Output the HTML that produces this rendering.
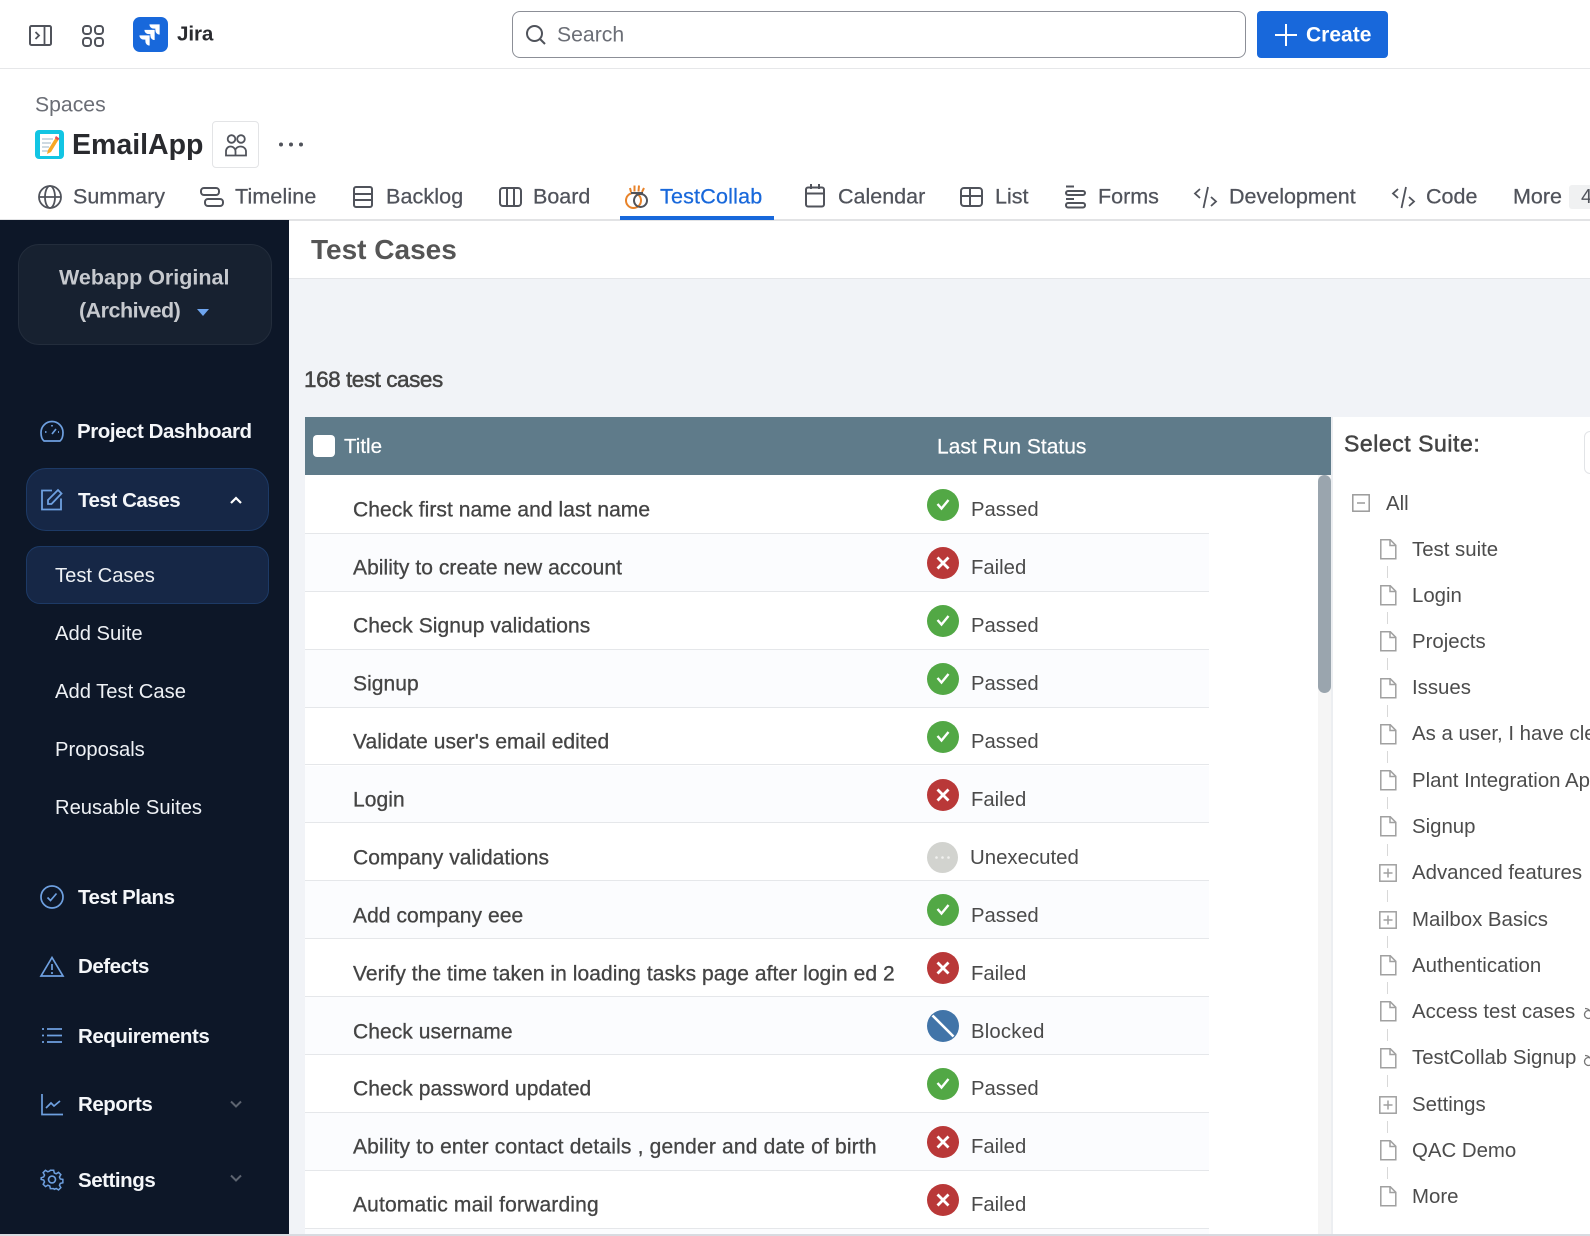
<!DOCTYPE html>
<html><head><meta charset="utf-8"><title>Test Cases</title>
<style>
*{box-sizing:border-box}
html{margin:0;padding:0;background:#fff;width:1590px;height:1236px;overflow:hidden}
body{margin:0;padding:0;background:#fff;width:1590px;height:1236px;overflow:hidden;font-family:"Liberation Sans",sans-serif;color:#444}
#w{position:relative;width:1590px;height:1236px;overflow:hidden}
.a,.t,svg.i{position:absolute}
.t{white-space:nowrap;line-height:1;transform:translateY(-50%)}
.tab{font-size:21.5px;color:#50535b;top:197px;-webkit-text-stroke:.25px #50535b}
.m{font-size:20.5px;font-weight:bold;color:#f4f6f9;left:78px;letter-spacing:-.45px;margin-top:1px}
.s{font-size:20.2px;color:#eef1f5;left:55px;margin-top:1px}
.row{position:absolute;left:305px;width:904px;height:57.9px;border-bottom:1px solid #e5e7ea}
.rt{position:absolute;left:48px;top:calc(50% + 6px);font-size:21px;letter-spacing:.06px;color:#444;white-space:nowrap;line-height:1;-webkit-text-stroke:.3px #444;transform:translateY(-50%)}
.st{position:absolute;left:666px;font-size:20.3px;color:#4a4a4a;line-height:1;top:calc(50% + 6px);transform:translateY(-50%);white-space:nowrap}
.ic{position:absolute;left:622px;top:13px;width:32px;height:32px;border-radius:50%}
.g{background:#52a845}.r{background:#b93838}.b{background:#4174a8}.u{background:#d2d3cf}
.ic svg{position:absolute;left:0;top:0}
.su{position:absolute;left:1412px;font-size:20.4px;color:#4c4c4c;white-space:nowrap;line-height:1;transform:translateY(-50%);margin-top:1px}
svg{overflow:visible}
</style></head><body><div id="w">

<!-- top bar -->
<div class="a" style="left:0;top:68px;width:1590px;height:1px;background:#e6e7e9"></div>
<svg class="i" style="left:29px;top:25px" width="23" height="21" viewBox="0 0 23 21" fill="none" stroke="#50535b" stroke-width="2"><rect x="1" y="1" width="21" height="19" rx="1.5"/><path d="M15.5 1v19M6.5 7l3.5 3.500-3.500 3.500" stroke-width="1.800"/></svg>
<svg class="i" style="left:82px;top:25px" width="22" height="22" viewBox="0 0 22 22" fill="none" stroke="#50535b" stroke-width="2"><rect x="1" y="1" width="8" height="8" rx="3"/><rect x="13" y="1" width="8" height="8" rx="3"/><rect x="1" y="13" width="8" height="8" rx="3"/><rect x="13" y="13" width="8" height="8" rx="3"/></svg>
<svg class="i" style="left:133px;top:17px" width="35" height="35" viewBox="0 0 35 35"><rect width="35" height="35" rx="7" fill="#1868db"/><path d="M16 7h11v11c-3 0-5-2-5-5v-1h-1c-3 0-5-2-5-5zM11 12.500h11v11c-3 0-5-2-5-5v-1h-1c-3 0-5-2-5-5zM6 18h11v11c-3 0-5-2-5-5v-1h-1c-3 0-5-2-5-5z" fill="#fff" stroke="#1868db" stroke-width=".7"/></svg>
<div class="t" style="left:177px;top:35px;font-size:20.6px;font-weight:bold;color:#292a2e;letter-spacing:-.1px">Jira</div>

<div class="a" style="left:512px;top:11px;width:734px;height:47px;border:1px solid #8c8f97;border-radius:8px"></div>
<svg class="i" style="left:525px;top:24px" width="22" height="22" viewBox="0 0 22 22" fill="none" stroke="#50535b" stroke-width="2"><circle cx="9.500" cy="9.500" r="7.500"/><path d="M15 15l5 5"/></svg>
<div class="t" style="left:557px;top:35px;font-size:21.200px;color:#6b6e76">Search</div>
<div class="a" style="left:1257px;top:11px;width:131px;height:47px;background:#1868db;border-radius:4px"></div>
<svg class="i" style="left:1275px;top:24px" width="22" height="22" viewBox="0 0 22 22" stroke="#fff" stroke-width="2"><path d="M11 0v22M0 11h22"/></svg>
<div class="t" style="left:1306px;top:35px;font-size:21px;font-weight:bold;color:#fff">Create</div>

<!-- space header -->
<div class="t" style="left:35px;top:105px;font-size:21.200px;color:#6b6e76">Spaces</div>
<svg class="i" style="left:35px;top:130px" width="29" height="29" viewBox="0 0 29 29"><rect width="29" height="29" rx="4" fill="#12c5e3"/><rect x="5" y="4" width="19" height="22" fill="#fff"/><path d="M7 9h11M7 13h9M7 17h7M7 21h6" stroke="#9db4c6" stroke-width="1"/><path d="M21 7l3 2-8 13-4 2 1-4z" fill="#f7a823"/><path d="M21 6l3.500 2.500-1.500 2-3.200-2.400z" fill="#e8505b"/></svg>
<div class="t" style="left:72px;top:145px;font-size:28.500px;font-weight:bold;color:#292a2e">EmailApp</div>
<div class="a" style="left:212px;top:121px;width:47px;height:47px;border:1px solid #e3e4e6;border-radius:4px"></div>
<svg class="i" style="left:225px;top:134px" width="22" height="23" viewBox="0 0 22 23" fill="none" stroke="#50535b" stroke-width="1.800"><circle cx="6.500" cy="5" r="3.800"/><circle cx="16" cy="5" r="3.800"/><path d="M1 21.500v-4c0-3 2-5 4.500-5s5 2 5 5v4zM10.500 15.500c1-2 3-3 5-3 3 0 5.500 2 5.500 5v4H10.500"/></svg>
<svg class="i" style="left:278px;top:142px" width="26" height="5" viewBox="0 0 26 5" fill="#50535b"><circle cx="3" cy="2.500" r="2"/><circle cx="13" cy="2.500" r="2"/><circle cx="23" cy="2.500" r="2"/></svg>

<!-- tabs -->
<svg class="i" style="left:38px;top:185px" width="24" height="24" viewBox="0 0 24 24" fill="none" stroke="#50535b" stroke-width="1.800"><circle cx="12" cy="12" r="11"/><ellipse cx="12" cy="12" rx="5" ry="11"/><path d="M1 12h22"/></svg>
<div class="t tab" style="left:73px">Summary</div>
<svg class="i" style="left:200px;top:187px" width="24" height="20" viewBox="0 0 24 20" fill="none" stroke="#50535b" stroke-width="2"><rect x="1" y="1" width="18" height="7" rx="3"/><rect x="5" y="12" width="18" height="7" rx="3"/></svg>
<div class="t tab" style="left:235px;letter-spacing:.12px">Timeline</div>
<svg class="i" style="left:353px;top:186px" width="20" height="22" viewBox="0 0 20 22" fill="none" stroke="#50535b" stroke-width="2"><rect x="1" y="1" width="18" height="20" rx="2"/><path d="M1 8h18M1 14h18"/></svg>
<div class="t tab" style="left:386px;letter-spacing:.12px">Backlog</div>
<svg class="i" style="left:499px;top:187px" width="23" height="20" viewBox="0 0 23 20" fill="none" stroke="#50535b" stroke-width="2"><rect x="1" y="1" width="21" height="18" rx="3"/><path d="M8 1v18M15 1v18"/></svg>
<div class="t tab" style="left:533px">Board</div>
<svg class="i" style="left:625px;top:184px" width="24" height="26" viewBox="0 0 24 26" fill="none"><circle cx="8.500" cy="16.500" r="7.500" stroke="#e8832a" stroke-width="2"/><circle cx="15.500" cy="16.500" r="6.500" stroke="#50535b" stroke-width="2"/><path d="M5 4l1 4M9.500 1.500v6M14 1.500l-.5 6M19 4l-2 4" stroke="#e8832a" stroke-width="2"/><path d="M6 9h12" stroke="#50535b" stroke-width="2"/></svg>
<div class="t tab" style="left:660px;color:#1868db;-webkit-text-stroke:.25px #1868db;letter-spacing:.2px">TestCollab</div>
<svg class="i" style="left:805px;top:184px" width="20" height="24" viewBox="0 0 20 24" fill="none" stroke="#50535b" stroke-width="2"><rect x="1" y="3.500" width="18" height="19" rx="2"/><path d="M1 9.500h18M6 0v5M14 0v5"/></svg>
<div class="t tab" style="left:838px">Calendar</div>
<svg class="i" style="left:960px;top:187px" width="23" height="20" viewBox="0 0 23 20" fill="none" stroke="#50535b" stroke-width="2"><rect x="1" y="1" width="21" height="18" rx="3"/><path d="M1 9h21M10 1v18"/></svg>
<div class="t tab" style="left:995px">List</div>
<svg class="i" style="left:1065px;top:185px" width="21" height="24" viewBox="0 0 21 24" fill="none" stroke="#50535b" stroke-width="2"><path d="M1 1.500h8M1 14h8"/><rect x="1" y="6" width="19" height="4" rx="2"/><rect x="1" y="18" width="19" height="4.500" rx="2"/></svg>
<div class="t tab" style="left:1098px">Forms</div>
<svg class="i" style="left:1194px;top:187px" width="23" height="21" viewBox="0 0 23 21" fill="none" stroke="#50535b" stroke-width="1.800"><path d="M6 2L1 6.500l5 4.500M17 10l5 4.500-5 4.500M14 0L9.500 21"/></svg>
<div class="t tab" style="left:1229px">Development</div>
<svg class="i" style="left:1392px;top:187px" width="23" height="21" viewBox="0 0 23 21" fill="none" stroke="#50535b" stroke-width="1.800"><path d="M6 2L1 6.500l5 4.500M17 10l5 4.500-5 4.500M14 0L9.500 21"/></svg>
<div class="t tab" style="left:1426px">Code</div>
<div class="t tab" style="left:1513px">More</div>
<div class="a" style="left:1569px;top:185px;width:30px;height:24px;background:#f0f1f2;border-radius:3px"></div>
<div class="t" style="left:1581px;top:197px;font-size:20px;color:#50535b">4</div>
<div class="a" style="left:0;top:219px;width:1590px;height:2px;background:#e2e3e5"></div>
<div class="a" style="left:620px;top:216px;width:154px;height:4px;background:#1868db"></div>

<!-- sidebar -->
<div class="a" style="left:0;top:220px;width:289px;height:1014px;background:#0d1728"></div>
<div class="a" style="left:18px;top:244px;width:254px;height:101px;background:#172130;border:1px solid #232d3c;border-radius:21px"></div>
<div class="t" style="left:59px;top:278px;font-size:21.500px;font-weight:bold;color:#c6c9ce">Webapp Original</div>
<div class="t" style="left:79px;top:311px;font-size:21.500px;font-weight:bold;color:#c6c9ce;letter-spacing:-.5px">(Archived)</div>
<div class="a" style="left:197px;top:309px;width:0;height:0;border-left:6px solid transparent;border-right:6px solid transparent;border-top:7px solid #6ea5ef"></div>

<svg class="i" style="left:40px;top:420px" width="24" height="22" viewBox="0 0 24 22" fill="none" stroke="#6ea0e0" stroke-width="1.700"><path d="M4 21C1.500 19 1 15 1 12.500a11 11 0 0 1 22 0c0 2.500-.5 6.500-3 8.500z"/><path d="M12 14l4-5M5 12h1.500M12 5v1.500M18 12h1"/></svg>
<div class="t m" style="left:77px;top:431px">Project Dashboard</div>
<div class="a" style="left:26px;top:468px;width:243px;height:63px;background:#162746;border:1px solid #1d3a66;border-radius:20px"></div>
<svg class="i" style="left:41px;top:488px" width="22" height="23" viewBox="0 0 22 23" fill="none" stroke="#6ea0e0" stroke-width="1.800"><path d="M11 2.500H1v19h19v-11"/><path d="M7 16v-4L17 2l3.500 3.500-10 10.500z"/></svg>
<div class="t m" style="top:500px">Test Cases</div>
<svg class="i" style="left:230px;top:496px" width="12" height="9" viewBox="0 0 12 9" fill="none" stroke="#fff" stroke-width="2.200"><path d="M1 7l5-5 5 5"/></svg>
<div class="a" style="left:26px;top:546px;width:243px;height:58px;background:#162746;border:1px solid #1d3a66;border-radius:14px"></div>
<div class="t s" style="top:575px">Test Cases</div>
<div class="t s" style="top:633px">Add Suite</div>
<div class="t s" style="top:691px">Add Test Case</div>
<div class="t s" style="top:749px">Proposals</div>
<div class="t s" style="top:807px">Reusable Suites</div>

<svg class="i" style="left:40px;top:885px" width="24" height="24" viewBox="0 0 24 24" fill="none" stroke="#6ea0e0" stroke-width="1.700"><circle cx="12" cy="12" r="11"/><path d="M7.500 12.500l3 3 6-7"/></svg>
<div class="t m" style="top:897px">Test Plans</div>
<svg class="i" style="left:40px;top:956px" width="24" height="21" viewBox="0 0 24 21" fill="none" stroke="#6ea0e0" stroke-width="1.700"><path d="M12 1.500L1 20h22z"/><path d="M12 8v6M12 16v2"/></svg>
<div class="t m" style="top:966px">Defects</div>
<svg class="i" style="left:42px;top:1027px" width="20" height="17" viewBox="0 0 20 17" fill="none" stroke="#6ea0e0" stroke-width="1.700"><path d="M0 2h2M5 2h15M0 8.500h2M5 8.500h15M0 15h2M5 15h15"/></svg>
<div class="t m" style="top:1036px">Requirements</div>
<svg class="i" style="left:41px;top:1094px" width="22" height="22" viewBox="0 0 22 22" fill="none" stroke="#6ea0e0" stroke-width="1.700"><path d="M1 0v20.500h21M5 14l5-5 3 3 6-5"/></svg>
<div class="t m" style="top:1104px">Reports</div>
<svg class="i" style="left:230px;top:1100px" width="12" height="9" viewBox="0 0 12 9" fill="none" stroke="#5d6470" stroke-width="2"><path d="M1 1.500l5 5 5-5"/></svg>
<svg class="i" style="left:41px;top:1168px" width="22" height="23" viewBox="0 0 24 24" fill="none" stroke="#6ea0e0" stroke-width="1.800"><circle cx="12" cy="12" r="3.800"/><path d="M10 1h4l.7 3.200 2.300 1 2.800-1.700 2.800 2.800-1.700 2.800 1 2.300 3.100.6v4l-3.100.7-1 2.300 1.700 2.800-2.800 2.800-2.800-1.700-2.300 1L14 23h-4l-.7-3.100-2.300-1-2.800 1.700-2.800-2.800L3 15l-1-2.300L-1 12v-2l3-1 1-2.300-1.700-2.800 2.800-2.800L7 2.800l2.300-1z" transform="translate(1.100 1) scale(.91)"/></svg>
<div class="t m" style="top:1180px">Settings</div>
<svg class="i" style="left:230px;top:1174px" width="12" height="9" viewBox="0 0 12 9" fill="none" stroke="#5d6470" stroke-width="2"><path d="M1 1.500l5 5 5-5"/></svg>

<!-- main -->
<div class="a" style="left:289px;top:221px;width:1301px;height:57px;background:#fff"></div>
<div class="a" style="left:289px;top:278px;width:1301px;height:1px;background:#e4e6e9"></div>
<div class="a" style="left:289px;top:279px;width:1301px;height:957px;background:#f1f3f7"></div>
<div class="t" style="left:311px;top:250px;font-size:28px;font-weight:bold;color:#555">Test Cases</div>
<div class="t" style="left:304px;top:380px;font-size:22.500px;color:#444;letter-spacing:-.45px;-webkit-text-stroke:.5px #444">168 test cases</div>

<div class="a" style="left:305px;top:475px;width:1026px;height:761px;background:#fff"></div>
<div class="a" style="left:305px;top:417px;width:1026px;height:58px;background:#5f7b8a"></div>
<div class="a" style="left:313px;top:435px;width:22px;height:22px;background:#fff;border-radius:4px"></div>
<div class="t" style="left:344px;top:447px;font-size:20.500px;color:#fff;-webkit-text-stroke:.2px #fff">Title</div>
<div class="t" style="left:937px;top:447px;font-size:21px;color:#fff;-webkit-text-stroke:.2px #fff">Last Run Status</div>

<div class="row" style="top:476px"><div class="rt">Check first name and last name</div><div class="ic g"><svg width="32" height="32" fill="none" stroke="#fff" stroke-width="2.400"><path d="M10.500 15l4 4.500 7-8.500"/></svg></div><div class="st">Passed</div></div>
<div class="row" style="top:533.9px;background:#fbfcfe"><div class="rt">Ability to create new account</div><div class="ic r"><svg width="32" height="32" stroke="#fff" stroke-width="2.800"><path d="M10.500 10.500l11 11M21.500 10.500l-11 11"/></svg></div><div class="st">Failed</div></div>
<div class="row" style="top:591.8px"><div class="rt">Check Signup validations</div><div class="ic g"><svg width="32" height="32" fill="none" stroke="#fff" stroke-width="2.400"><path d="M10.500 15l4 4.500 7-8.500"/></svg></div><div class="st">Passed</div></div>
<div class="row" style="top:649.7px;background:#fbfcfe"><div class="rt">Signup</div><div class="ic g"><svg width="32" height="32" fill="none" stroke="#fff" stroke-width="2.400"><path d="M10.500 15l4 4.500 7-8.500"/></svg></div><div class="st">Passed</div></div>
<div class="row" style="top:707.6px"><div class="rt">Validate user's email edited</div><div class="ic g"><svg width="32" height="32" fill="none" stroke="#fff" stroke-width="2.400"><path d="M10.500 15l4 4.500 7-8.500"/></svg></div><div class="st">Passed</div></div>
<div class="row" style="top:765.5px;background:#fbfcfe"><div class="rt">Login</div><div class="ic r"><svg width="32" height="32" stroke="#fff" stroke-width="2.800"><path d="M10.500 10.500l11 11M21.500 10.500l-11 11"/></svg></div><div class="st">Failed</div></div>
<div class="row" style="top:823.4px"><div class="rt">Company validations</div><div class="ic u" style="top:19px;left:622px;width:31px;height:31px"><svg width="31" height="31" fill="#f1f1ef"><circle cx="9.500" cy="15.500" r="1.300"/><circle cx="15.500" cy="15.500" r="1.300"/><circle cx="21.500" cy="15.500" r="1.300"/></svg></div><div class="st" style="left:665px;font-size:20.400px">Unexecuted</div></div>
<div class="row" style="top:881.3px;background:#fbfcfe"><div class="rt">Add company eee</div><div class="ic g"><svg width="32" height="32" fill="none" stroke="#fff" stroke-width="2.400"><path d="M10.500 15l4 4.500 7-8.500"/></svg></div><div class="st">Passed</div></div>
<div class="row" style="top:939.2px"><div class="rt">Verify the time taken in loading tasks page after login ed 2</div><div class="ic r"><svg width="32" height="32" stroke="#fff" stroke-width="2.800"><path d="M10.500 10.500l11 11M21.500 10.500l-11 11"/></svg></div><div class="st">Failed</div></div>
<div class="row" style="top:997.1px;background:#fbfcfe"><div class="rt">Check username</div><div class="ic b"><svg width="32" height="32" stroke="#fff" stroke-width="2.600"><path d="M5.500 5.500l21 21"/></svg></div><div class="st" style="letter-spacing:.2px">Blocked</div></div>
<div class="row" style="top:1055px"><div class="rt">Check password updated</div><div class="ic g"><svg width="32" height="32" fill="none" stroke="#fff" stroke-width="2.400"><path d="M10.500 15l4 4.500 7-8.500"/></svg></div><div class="st">Passed</div></div>
<div class="row" style="top:1112.9px;background:#fbfcfe"><div class="rt" style="letter-spacing:.17px">Ability to enter contact details , gender and date of birth</div><div class="ic r"><svg width="32" height="32" stroke="#fff" stroke-width="2.800"><path d="M10.500 10.500l11 11M21.500 10.500l-11 11"/></svg></div><div class="st">Failed</div></div>
<div class="row" style="top:1170.8px"><div class="rt" style="letter-spacing:.17px">Automatic mail forwarding</div><div class="ic r"><svg width="32" height="32" stroke="#fff" stroke-width="2.800"><path d="M10.500 10.500l11 11M21.500 10.500l-11 11"/></svg></div><div class="st">Failed</div></div>
<div class="row" style="top:1228.7px;background:#fbfcfe;border:0;height:8px"></div>

<div class="a" style="left:1318px;top:475px;width:13px;height:761px;background:#f5f5f5"></div>
<div class="a" style="left:1318px;top:475px;width:13px;height:218px;background:#9aa5ae;border-radius:7px"></div>

<!-- suite panel -->
<div class="a" style="left:1331px;top:417px;width:259px;height:819px;background:#fff;border-left:2px solid #eceef1"></div>
<div class="t" style="left:1344px;top:444px;font-size:23px;letter-spacing:.55px;color:#444;-webkit-text-stroke:.5px #444">Select Suite:</div>
<div class="a" style="left:1584px;top:431px;width:20px;height:43px;border:1px solid #e2e4e7;border-radius:6px"></div>
<svg class="i" style="left:1352px;top:494px" width="18" height="18" fill="none" stroke="#9a9a9a" stroke-width="1.500"><rect x=".8" y=".8" width="16.400" height="16.400"/><path d="M5 9h8"/></svg>
<div class="su" style="left:1386px;top:503px">All</div>

<svg width="0" height="0" style="position:absolute"><defs><g id="doc" fill="none" stroke="#a0a0a0" stroke-width="1.500"><path d="M.8.800h9.500l5.500 5.500v13.400H.8z"/><path d="M10 1v5.500h5.800"/></g><g id="plus" fill="none" stroke="#a0a0a0" stroke-width="1.500"><rect x=".8" y=".8" width="16.400" height="16.400"/><path d="M4.500 9h9M9 4.500v9"/></g></defs></svg>

<svg class="i" style="left:1380px;top:539px" width="17" height="21"><use href="#doc"/></svg><div class="su" style="top:549px">Test suite</div>
<svg class="i" style="left:1380px;top:585px" width="17" height="21"><use href="#doc"/></svg><div class="su" style="top:595px">Login</div>
<svg class="i" style="left:1380px;top:631px" width="17" height="21"><use href="#doc"/></svg><div class="su" style="top:641px">Projects</div>
<svg class="i" style="left:1380px;top:678px" width="17" height="21"><use href="#doc"/></svg><div class="su" style="top:687px">Issues</div>
<svg class="i" style="left:1380px;top:724px" width="17" height="21"><use href="#doc"/></svg><div class="su" style="top:733px">As a user, I have clear</div>
<svg class="i" style="left:1380px;top:770px" width="17" height="21"><use href="#doc"/></svg><div class="su" style="top:780px">Plant Integration App</div>
<svg class="i" style="left:1380px;top:816px" width="17" height="21"><use href="#doc"/></svg><div class="su" style="top:826px">Signup</div>
<svg class="i" style="left:1379px;top:864px" width="18" height="18"><use href="#plus"/></svg><div class="su" style="top:872px">Advanced features</div>
<svg class="i" style="left:1379px;top:911px" width="18" height="18"><use href="#plus"/></svg><div class="su" style="top:919px">Mailbox Basics</div>
<svg class="i" style="left:1380px;top:955px" width="17" height="21"><use href="#doc"/></svg><div class="su" style="top:965px">Authentication</div>
<svg class="i" style="left:1380px;top:1001px" width="17" height="21"><use href="#doc"/></svg><div class="su" style="top:1011px">Access test cases</div>
<svg class="i" style="left:1380px;top:1048px" width="17" height="21"><use href="#doc"/></svg><div class="su" style="top:1057px">TestCollab Signup</div>
<svg class="i" style="left:1379px;top:1096px" width="18" height="18"><use href="#plus"/></svg><div class="su" style="top:1104px">Settings</div>
<svg class="i" style="left:1380px;top:1140px" width="17" height="21"><use href="#doc"/></svg><div class="su" style="top:1150px">QAC Demo</div>
<svg class="i" style="left:1380px;top:1186px" width="17" height="21"><use href="#doc"/></svg><div class="su" style="top:1196px">More</div>

<svg class="i" style="left:1583px;top:1005px" width="8" height="15" fill="none" stroke="#777" stroke-width="1.300"><circle cx="5.500" cy="9.500" r="4"/><path d="M2 3.500c2 0 4 1 5.500 3"/></svg>
<svg class="i" style="left:1583px;top:1052px" width="8" height="15" fill="none" stroke="#777" stroke-width="1.300"><circle cx="5.500" cy="9.500" r="4"/><path d="M2 3.500c2 0 4 1 5.500 3"/></svg>

<svg class="i" style="left:1387px;top:560px" width="1" height="630" stroke="#d8d8d8" stroke-width="1"><path d="M.5 6v12M.5 52v12M.5 98v12M.5 145v12M.5 191v12M.5 237v12M.5 284v12M.5 330v12M.5 376v12M.5 422v12M.5 469v12M.5 515v12M.5 561v12M.5 607v12"/></svg>

<div class="a" style="left:0;top:1234px;width:1590px;height:2px;background:#d8dbe1"></div>
</div></body></html>
